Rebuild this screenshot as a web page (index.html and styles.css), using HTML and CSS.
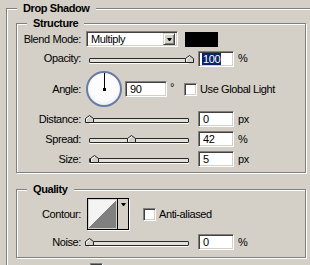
FILE: index.html
```html
<!DOCTYPE html>
<html lang="en">

<head>
     <meta charset="UTF-8">
     <title>Drop Shadow</title>
     <link rel="stylesheet" href="styles.css">
</head>

<body>

     <div class="group outer">
          <div class="group-title">Drop Shadow</div>

          <div class="group inner structure">
               <div class="group-title">Structure</div>

               <div class="row row-blend">
                    <span class="label">Blend Mode:</span>
                    <div class="select">
                         <span class="select-value">Multiply</span>
                         <span class="drop-btn"><span class="arrow"></span></span>
                    </div>
                    <span class="swatch"></span>
               </div>

               <div class="row row-opacity">
                    <span class="label">Opacity:</span>
                    <div class="slider">
                         <span class="track"></span>
                         <svg class="thumb" style="left: 100%" width="9" height="8" viewBox="0 0 9 8">
                              <polygon points="0.5,7.5 0.5,3.5 4.5,0.5 8.5,3.5 8.5,7.5" fill="#d4d0c8" stroke="#222" />
                              <polyline points="1.5,6.5 1.5,4 4.5,1.8" fill="none" stroke="#fff" />
                         </svg>
                    </div>
                    <span class="field"><span class="selected">100</span></span>
                    <span class="unit">%</span>
               </div>

               <div class="row row-angle">
                    <span class="label">Angle:</span>
                    <span class="dial"></span>
                    <span class="field field-angle">90</span>
                    <span class="degree">°</span>
                    <span class="check"></span>
                    <span class="check-text">Use Global Light</span>
               </div>

               <div class="row row-slider">
                    <span class="label">Distance:</span>
                    <div class="slider">
                         <span class="track"></span>
                         <svg class="thumb" style="left: 0%" width="9" height="8" viewBox="0 0 9 8">
                              <polygon points="0.5,7.5 0.5,3.5 4.5,0.5 8.5,3.5 8.5,7.5" fill="#d4d0c8" stroke="#222" />
                              <polyline points="1.5,6.5 1.5,4 4.5,1.8" fill="none" stroke="#fff" />
                         </svg>
                    </div>
                    <span class="field">0</span>
                    <span class="unit">px</span>
               </div>

               <div class="row row-slider">
                    <span class="label">Spread:</span>
                    <div class="slider">
                         <span class="track"></span>
                         <svg class="thumb" style="left: 42%" width="9" height="8" viewBox="0 0 9 8">
                              <polygon points="0.5,7.5 0.5,3.5 4.5,0.5 8.5,3.5 8.5,7.5" fill="#d4d0c8" stroke="#222" />
                              <polyline points="1.5,6.5 1.5,4 4.5,1.8" fill="none" stroke="#fff" />
                         </svg>
                    </div>
                    <span class="field">42</span>
                    <span class="unit">%</span>
               </div>

               <div class="row row-slider">
                    <span class="label">Size:</span>
                    <div class="slider">
                         <span class="track"></span>
                         <svg class="thumb" style="left: 5%" width="9" height="8" viewBox="0 0 9 8">
                              <polygon points="0.5,7.5 0.5,3.5 4.5,0.5 8.5,3.5 8.5,7.5" fill="#d4d0c8" stroke="#222" />
                              <polyline points="1.5,6.5 1.5,4 4.5,1.8" fill="none" stroke="#fff" />
                         </svg>
                    </div>
                    <span class="field">5</span>
                    <span class="unit">px</span>
               </div>
          </div>

          <div class="group inner quality">
               <div class="group-title">Quality</div>

               <div class="row row-contour">
                    <span class="label">Contour:</span>
                    <div class="contour">
                         <span class="contour-preview"></span>
                         <span class="contour-drop"><span class="arrow"></span></span>
                    </div>
                    <span class="check check-anti"></span>
                    <span class="check-text">Anti-aliased</span>
               </div>

               <div class="row row-slider">
                    <span class="label">Noise:</span>
                    <div class="slider">
                         <span class="track"></span>
                         <svg class="thumb" style="left: 0%" width="9" height="8" viewBox="0 0 9 8">
                              <polygon points="0.5,7.5 0.5,3.5 4.5,0.5 8.5,3.5 8.5,7.5" fill="#d4d0c8" stroke="#222" />
                              <polyline points="1.5,6.5 1.5,4 4.5,1.8" fill="none" stroke="#fff" />
                         </svg>
                    </div>
                    <span class="field">0</span>
                    <span class="unit">%</span>
               </div>
          </div>

          <span class="check check-next"></span>
     </div>

</body>

</html>
```

FILE: styles.css
```css
* {
     box-sizing: border-box;
     margin: 0;
     padding: 0;
}

html {
     width: 310px;
     height: 265px;
     overflow: hidden;
     background: #d4d0c8;
}

body {
     font-family: "Liberation Sans", Arial, sans-serif;
     font-size: 11px;
     line-height: 13px;
     letter-spacing: -0.4px;
     color: #000;
}

/* etched group boxes */
.group {
     border: 1px solid #808080;
     box-shadow: inset 1px 1px 0 #fff, 1px 1px 0 #fff;
}

.outer {
     margin: 8px 0 0 6px;
     width: 320px;
     height: 300px;
}

.inner {
     margin: 8px 0 0 9px;
     width: 290px;
}

.structure {
     padding-bottom: 3px;
}

.quality {
     margin-top: 16px;
     padding-bottom: 5px;
}

.group-title {
     display: table;
     height: 13px;
     margin: -7px 0 0 10px;
     padding: 0 6px;
     background: #d4d0c8;
     font-weight: bold;
}

/* rows */
.row {
     display: flex;
     align-items: center;
}

.row-blend {
     height: 18px;
}

.row-opacity {
     height: 21px;
}

.row-angle {
     height: 40px;
}

.row-slider {
     height: 20px;
}

.row-contour {
     height: 36px;
}

.label {
     flex: none;
     width: 64px;
     text-align: right;
}

/* sunken boxes */
.select,
.field,
.check {
     flex: none;
     background: #fff;
     border: 1px solid;
     border-color: #808080 #fff #fff #808080;
     box-shadow: inset 1px 1px 0 #404040, inset -1px -1px 0 #d4d0c8;
}

.select {
     display: flex;
     align-items: center;
     justify-content: space-between;
     width: 92px;
     height: 16px;
     margin-left: 5px;
     padding: 2px 2px 2px 4px;
}

.drop-btn {
     display: flex;
     align-items: center;
     justify-content: center;
     width: 12px;
     height: 12px;
     background: #d4d0c8;
     border: 1px solid;
     border-color: #d4d0c8 #404040 #404040 #d4d0c8;
     box-shadow: inset 1px 1px 0 #fff, inset -1px -1px 0 #808080;
}

.arrow {
     width: 1px;
     height: 0;
     border-top: 3px solid #000;
     border-left: 2px solid transparent;
     border-right: 2px solid transparent;
     box-sizing: content-box;
}

.swatch {
     flex: none;
     width: 33px;
     height: 15px;
     margin-left: 7px;
     background: #000;
}

/* sliders */
.slider {
     flex: none;
     position: relative;
     width: 100px;
     height: 8px;
     margin-left: 8px;
}

.track {
     display: block;
     height: 5px;
     margin-top: 3px;
     border: 1px solid #2a2a2a;
     border-radius: 1px;
     background: #e4e1da;
     box-shadow: 0 1px 0 #fff;
}

.thumb {
     position: absolute;
     top: 0;
     margin-left: -4px;
     display: block;
}

.field {
     display: flex;
     align-items: center;
     width: 36px;
     height: 16px;
     margin-left: 9px;
     padding-left: 4px;
}

.selected {
     background: #0a246a;
     color: #fff;
     padding: 0 1px;
     line-height: 12px;
     margin-left: -1px;
}

.unit {
     margin-left: 4px;
}

/* angle */
.dial {
     flex: none;
     position: relative;
     width: 36px;
     height: 36px;
     margin-left: 5px;
     border: 2px solid #6a7ca6;
     border-radius: 50%;
     background: radial-gradient(circle at 50% 40%, #fcfcfc 55%, #eceef2 78%, #cdd2dc 100%);
}

.dial::before {
     content: "";
     position: absolute;
     left: 16px;
     top: 0;
     width: 1px;
     height: 16px;
     background: #000;
}

.dial::after {
     content: "";
     position: absolute;
     left: 15px;
     top: 15px;
     width: 3px;
     height: 3px;
     background: #000;
}

.field-angle {
     width: 42px;
     margin-left: 3px;
}

.degree {
     width: 7px;
     margin-left: 3px;
     align-self: flex-start;
     margin-top: 12px;
}

.check {
     width: 13px;
     height: 13px;
     margin-left: 7px;
}

.check-text {
     margin-left: 3px;
}

/* contour */
.contour {
     flex: none;
     display: flex;
     width: 42px;
     height: 32px;
     margin-left: 6px;
     border: 1px solid #000;
     box-shadow: 1px 1px 0 #fff;
}

.contour-preview {
     flex: 1;
     margin: 1px;
     background: linear-gradient(to top left, #808080 50%, #f4f4f4 50%);
}

.contour-drop {
     display: flex;
     justify-content: center;
     width: 11px;
     padding-top: 4px;
     border-left: 1px solid #000;
     background: #d4d0c8;
}

.check-anti {
     margin-left: 14px;
}

.check-next {
     display: block;
     margin: 5px 0 0 83px;
}
```
